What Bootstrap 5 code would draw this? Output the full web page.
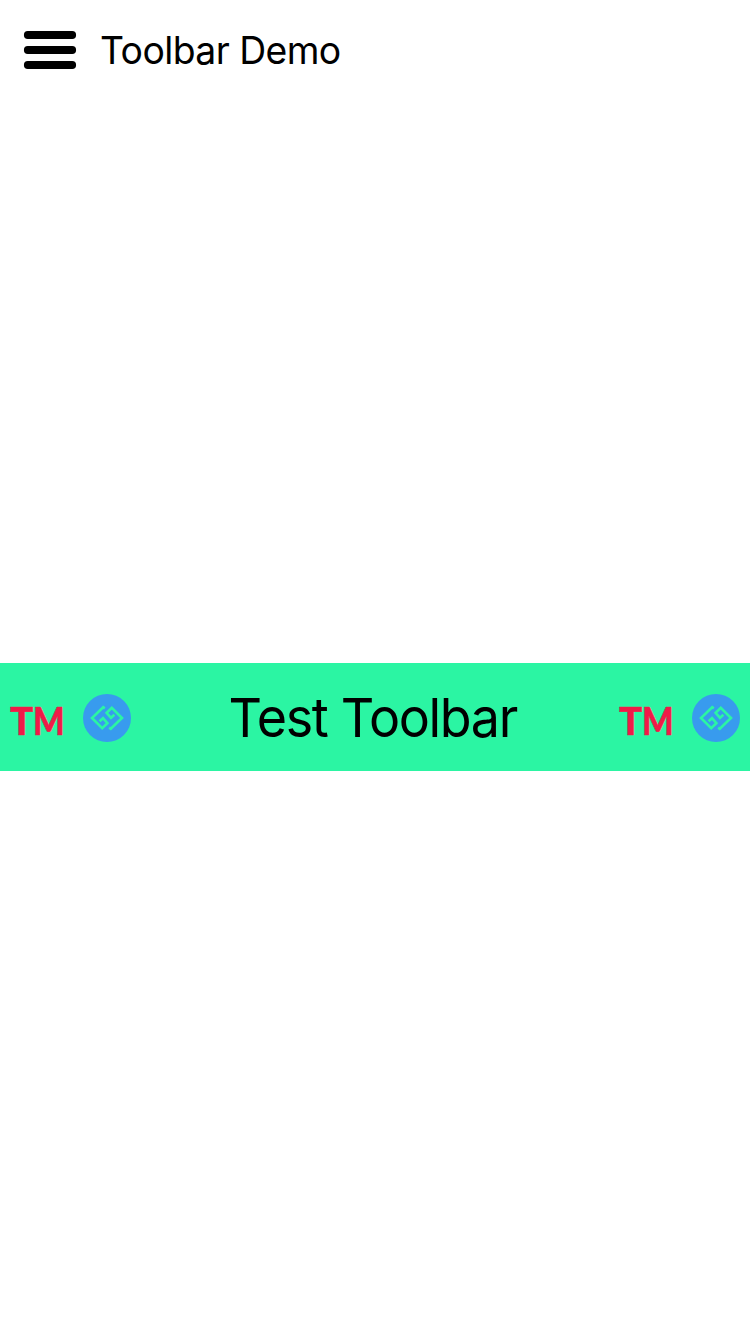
<!DOCTYPE html>
<html lang="en">
<head>
<meta charset="utf-8">
<meta name="viewport" content="width=device-width, initial-scale=1">
<title>Toolbar Demo</title>
<link href="https://cdn.jsdelivr.net/npm/bootstrap@5.3.0/dist/css/bootstrap.min.css" rel="stylesheet">
<style>
body{font-family:Inter,"Liberation Sans",sans-serif;color:#000;background:#fff}
.page{height:1334px}
.app-header{height:100px;padding-left:23px;gap:22.5px}
.app-title{font-size:38.5px;line-height:48px;letter-spacing:-.6px;white-space:nowrap;transform:scaleX(.97);transform-origin:left}
.demo-bar{height:108px;margin-top:563px;background:#2bf5a3;padding:2px 10px 0 9px}
.bar-title{font-size:54px;line-height:64px;letter-spacing:-1.4px;white-space:nowrap;padding-right:4px;transform:scaleX(.963)}
.bar-icons{gap:18px}
.tm-text{font:900 38.5px Lato,sans-serif;fill:#f01a48;stroke:#f01a48;stroke-width:.5;stroke-linejoin:round}
svg{display:block;flex:none;overflow:visible}
</style>
</head>
<body>
<svg width="0" height="0" class="position-absolute" aria-hidden="true">
<symbol id="coin" viewBox="0 0 48 48"><circle cx="24" cy="24" r="24" fill="#389bee"/>
<g fill="none" stroke="#2bf5a3" stroke-width="2.6"><path d="M21.8 14.4 20.2 13.2 9 24 19.2 34.2 24.4 29.2 20 24.2 16.6 27.2"/><path d="M21.8 14.4 20.2 13.2 9 24 19.2 34.2 24.4 29.2 20 24.2 16.6 27.2" transform="rotate(180 24 24)"/></g></symbol>
</svg>
<main class="page overflow-hidden">
<header class="app-header d-flex align-items-center">
<svg width="54" height="40" viewBox="0 0 54 40" role="img" aria-label="Menu"><path d="M4.8 5h44.4M4.8 20h44.4M4.8 35h44.4" stroke="#000" stroke-width="7.8" stroke-linecap="round"/></svg>
<h1 class="app-title fw-normal m-0">Toolbar Demo</h1>
</header>
<nav class="demo-bar d-flex align-items-center justify-content-between">
<div class="bar-icons d-flex"><svg width="56" height="48"><text class="tm-text" y="40.8"><tspan x="1" textLength="23.2" lengthAdjust="spacingAndGlyphs">T</tspan><tspan x="24" textLength="31.6" lengthAdjust="spacingAndGlyphs">M</tspan></text></svg><svg width="48" height="48"><use href="#coin"/></svg></div>
<span class="bar-title">Test Toolbar</span>
<div class="bar-icons d-flex"><svg width="56" height="48"><text class="tm-text" y="40.8"><tspan x="1" textLength="23.2" lengthAdjust="spacingAndGlyphs">T</tspan><tspan x="24" textLength="31.6" lengthAdjust="spacingAndGlyphs">M</tspan></text></svg><svg width="48" height="48"><use href="#coin"/></svg></div>
</nav>
</main>
<script src="https://cdn.jsdelivr.net/npm/bootstrap@5.3.0/dist/js/bootstrap.bundle.min.js"></script>
</body>
</html>
